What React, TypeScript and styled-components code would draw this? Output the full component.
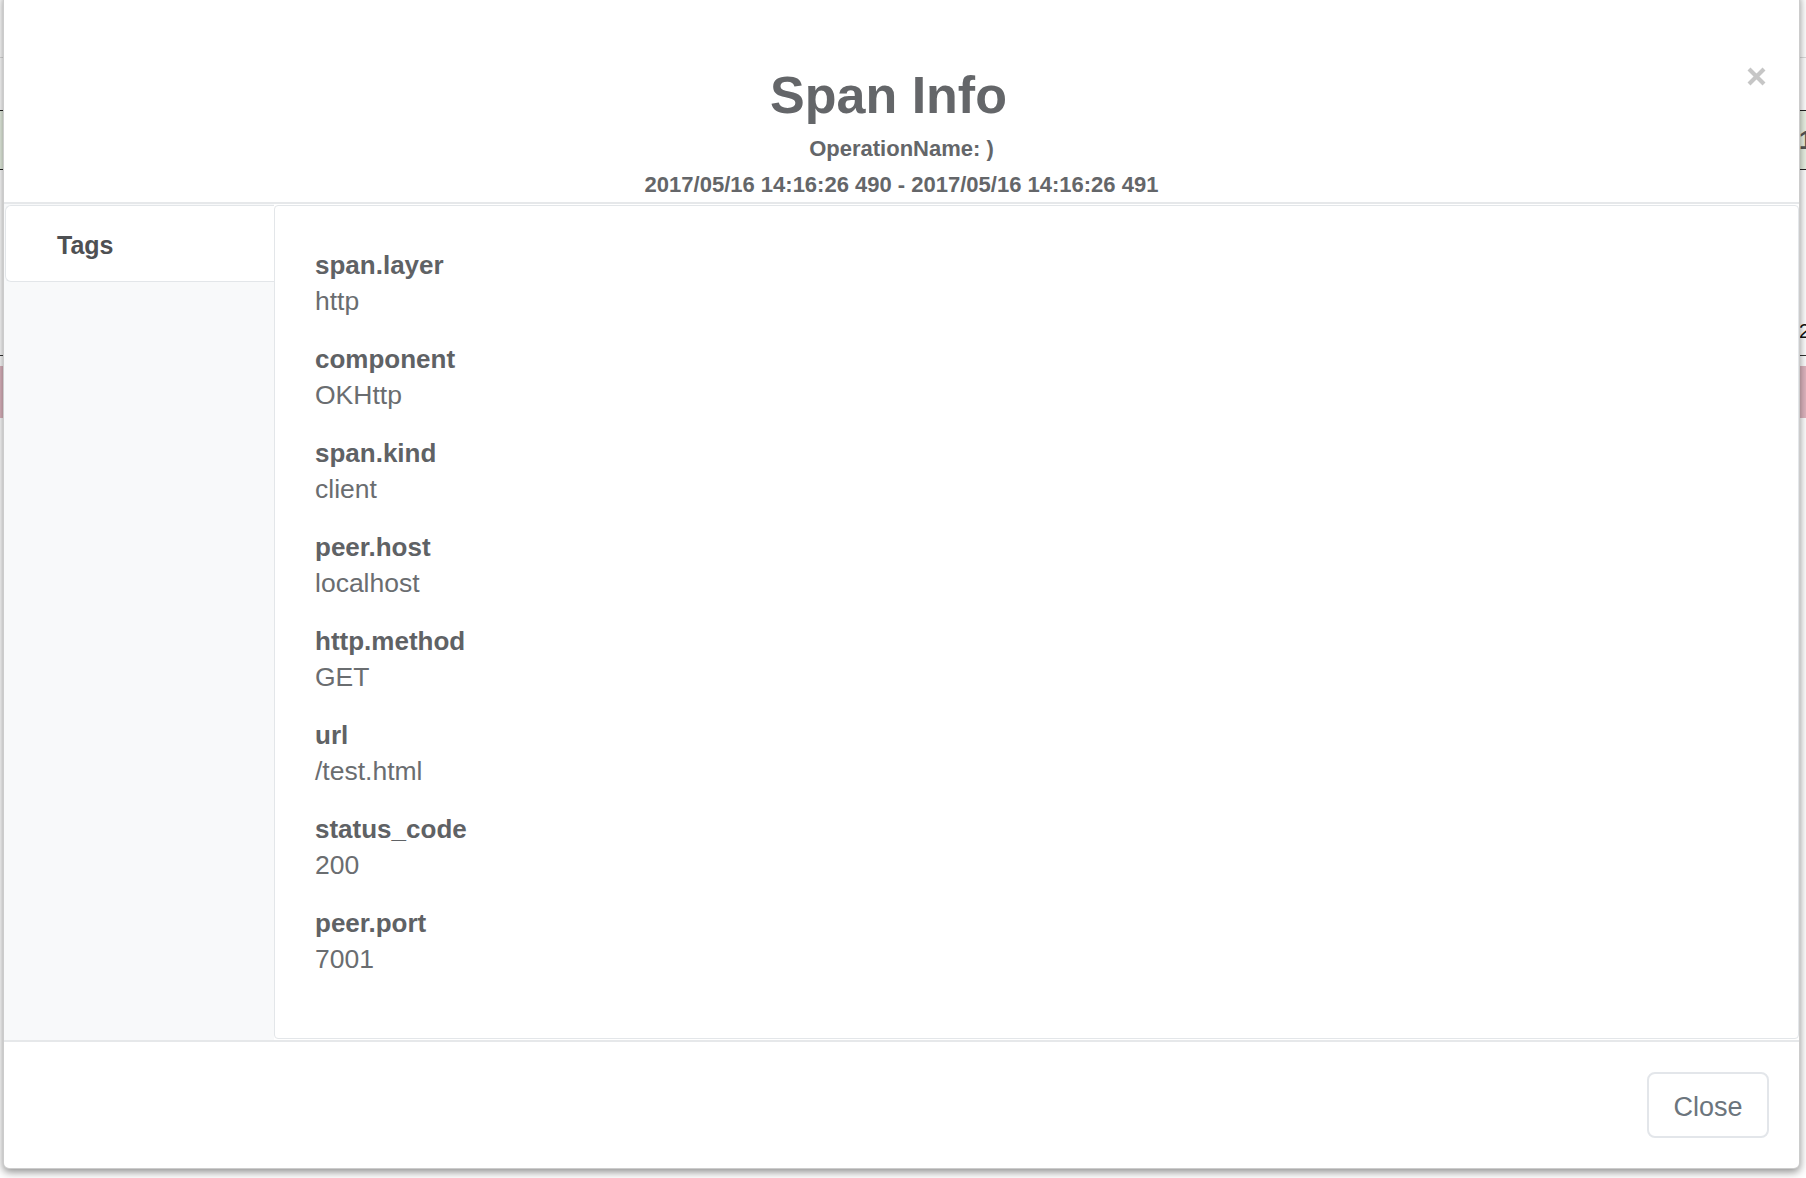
import React from "react";
import styled, { createGlobalStyle } from "styled-components";

const GlobalStyle = createGlobalStyle`
  html, body { margin: 0; padding: 0; background: #fff; }
  body {
    font-family: "Liberation Sans", Arial, Helvetica, sans-serif;
    overflow: hidden;
  }
  #root { width: 1806px; height: 1178px; overflow: hidden; }
`;

const Page = styled.div`
  position: relative;
  width: 1806px;
  height: 1178px;
  overflow: hidden;
  background: #fff;
`;

/* ---------- background page (table behind the modal) ---------- */
const BgTable = styled.div`
  display: flex;
  flex-direction: column;
`;

const BgRow = styled.div<{ $h: number; $bg?: string; $top?: string; $bottom?: string; $align?: string }>`
  box-sizing: border-box;
  height: ${(p) => p.$h}px;
  background: ${(p) => p.$bg || "transparent"};
  border-top: ${(p) => p.$top || "none"};
  border-bottom: ${(p) => p.$bottom || "none"};
  display: grid;
  grid-template-columns: 1799px 1fr;
  align-items: ${(p) => p.$align || "center"};
`;

const BgCell = styled.div<{ $color?: string; $size?: number; $weight?: number; $pb?: number }>`
  color: ${(p) => p.$color || "#333"};
  font-size: ${(p) => p.$size || 24}px;
  font-weight: ${(p) => p.$weight || 400};
  padding-bottom: ${(p) => p.$pb || 0}px;
  white-space: nowrap;
`;

/* ---------- modal ---------- */
const Modal = styled.div`
  position: absolute;
  left: 3px;
  top: -8px;
  width: 1797px;
  box-sizing: border-box;
  background: #fff;
  border: 1px solid rgba(0, 0, 0, 0.2);
  border-radius: 6px;
  box-shadow: 0 3px 9px rgba(0, 0, 0, 0.45);
  display: flex;
  flex-direction: column;
`;

const Header = styled.div`
  padding: 74px 30px 2px;
  border-bottom: 2px solid #e6e8ea;
  text-align: center;
`;

const TitleRow = styled.div`
  display: flex;
  align-items: flex-start;
`;

const Title = styled.h2`
  flex: 1;
  margin: 0;
  font-size: 52px;
  line-height: 57.2px;
  font-weight: 700;
  color: #646669;
  text-align: center;
`;

const CloseX = styled.button`
  width: 26px;
  height: 19px;
  padding: 0;
  margin: 0;
  border: none;
  background: transparent;
  display: flex;
  align-items: center;
  justify-content: center;
  cursor: pointer;
`;

const SubLine = styled.div<{ $mt?: number }>`
  margin-top: ${(p) => p.$mt || 0}px;
  font-size: 22px;
  line-height: 30px;
  font-weight: 700;
  color: #646669;
`;

const Body = styled.div`
  display: flex;
  height: 836px;
`;

const Sidebar = styled.div`
  width: 270px;
  background: #f8f9fa;
  display: flex;
  flex-direction: column;
`;

const Tab = styled.div<{ $active?: boolean }>`
  margin: 1px 0 0 1px;
  height: 77px;
  box-sizing: border-box;
  padding: 21px 0 16px 51px;
  background: ${(p) => (p.$active ? "#fff" : "transparent")};
  border: 1px solid #e3e6e9;
  border-right: none;
  border-radius: 6px 0 0 6px;
  font-size: 25px;
  line-height: 37.5px;
  font-weight: 700;
  color: #4e5053;
`;

const Pane = styled.div`
  flex: 1;
  margin: 1px 0 1px;
  box-sizing: border-box;
  border: 1px solid #e3e6e9;
  border-radius: 4px;
  background: #fff;
  padding: 41px 40px 40px;
`;

const TagItem = styled.div`
  margin-bottom: 22px;
`;

const TagKey = styled.div`
  font-size: 26px;
  line-height: 36px;
  font-weight: 700;
  color: #5f6265;
`;

const TagValue = styled.div`
  font-size: 26.5px;
  line-height: 36px;
  color: #6a6d70;
`;

const Footer = styled.div`
  border-top: 2px solid #e6e8ea;
  padding: 30px 30px 30px;
  display: flex;
  justify-content: flex-end;
`;

const Button = styled.button`
  width: 122px;
  height: 66px;
  box-sizing: border-box;
  border: 2px solid #e3e6ea;
  border-radius: 8px;
  background: #fff;
  font-family: "Liberation Sans", Arial, sans-serif;
  font-size: 27px;
  color: #6c757d;
  padding: 4px 0 0;
  cursor: pointer;
`;

const tags: [string, string][] = [
  ["span.layer", "http"],
  ["component", "OKHttp"],
  ["span.kind", "client"],
  ["peer.host", "localhost"],
  ["http.method", "GET"],
  ["url", "/test.html"],
  ["status_code", "200"],
  ["peer.port", "7001"],
];

export default function App() {
  return (
    <Page>
      <GlobalStyle />
      <BgTable>
        <BgRow $h={58} $bottom="1px solid #dcdcdc" />
        <BgRow $h={52} />
        <BgRow $h={60} $bg="#e9f2e4" $top="1px solid #222" $bottom="1px solid #222">
          <span />
          <BgCell $color="#555" $size={26} $weight={700}>1</BgCell>
        </BgRow>
        <BgRow $h={186} $bottom="1px solid #333" $align="end">
          <span />
          <BgCell $color="#111" $size={20} $pb={12}>2</BgCell>
        </BgRow>
        <BgRow $h={10} />
        <BgRow $h={52} $bg="#dfb6c0" />
      </BgTable>

      <Modal>
        <Header>
          <TitleRow>
            <Title>Span Info</Title>
            <CloseX aria-label="Close">
              <svg width="19" height="19" viewBox="0 0 19 19">
                <path d="M2 2 L17 17 M17 2 L2 17" stroke="#c6c6c6" strokeWidth="4.2" strokeLinecap="butt" />
              </svg>
            </CloseX>
          </TitleRow>
          <SubLine $mt={10}>OperationName: )</SubLine>
          <SubLine $mt={6}>2017/05/16 14:16:26 490 - 2017/05/16 14:16:26 491</SubLine>
        </Header>
        <Body>
          <Sidebar>
            <Tab $active>Tags</Tab>
          </Sidebar>
          <Pane>
            {tags.map(([k, v]) => (
              <TagItem key={k}>
                <TagKey>{k}</TagKey>
                <TagValue>{v}</TagValue>
              </TagItem>
            ))}
          </Pane>
        </Body>
        <Footer>
          <Button>Close</Button>
        </Footer>
      </Modal>
    </Page>
  );
}
